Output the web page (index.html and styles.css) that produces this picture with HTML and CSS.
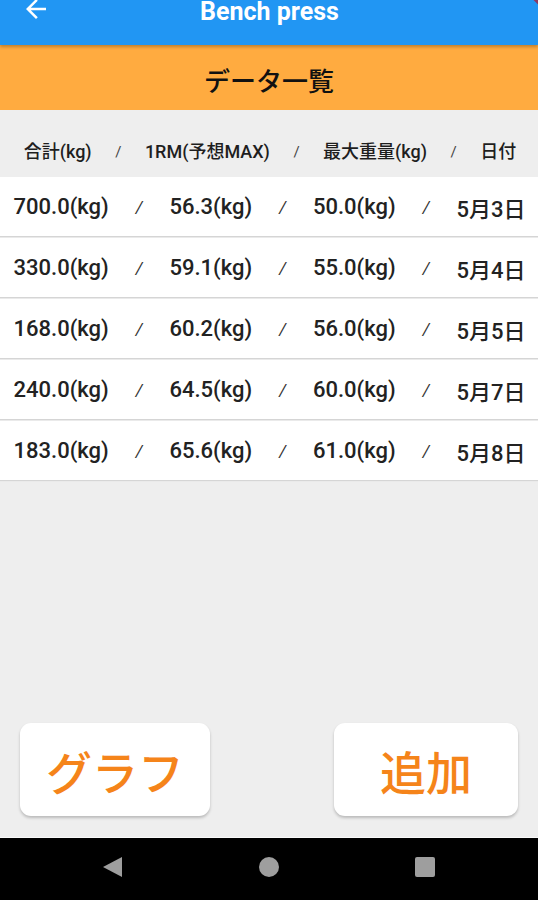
FILE: index.html
```html
<!DOCTYPE html>
<html lang="ja">
<head>
<meta charset="utf-8">
<title>Bench press</title>
<link rel="stylesheet" href="styles.css">
</head>
<body>
<div class="screen">
  <header class="appbar">
    <svg class="back" viewBox="0 0 24 24" width="30" height="30"><path d="M20 11H7.83l5.59-5.59L12 4l-8 8 8 8 1.41-1.41L7.83 13H20v-2z" fill="#fff"/></svg>
    <div class="title">Bench press</div>
    <div class="debug"></div>
  </header>
  <div class="band">データ一覧</div>
  <div class="colhead">
    <span>合計(kg)</span><span class="sl">/</span><span>1RM(予想MAX)</span><span class="sl">/</span><span>最大重量(kg)</span><span class="sl">/</span><span>日付</span>
  </div>
  <div class="list">
    <div class="row"><span>700.0(kg)</span><span class="sl">/</span><span>56.3(kg)</span><span class="sl">/</span><span>50.0(kg)</span><span class="sl">/</span><span>5月3日</span></div>
    <div class="row"><span>330.0(kg)</span><span class="sl">/</span><span>59.1(kg)</span><span class="sl">/</span><span>55.0(kg)</span><span class="sl">/</span><span>5月4日</span></div>
    <div class="row"><span>168.0(kg)</span><span class="sl">/</span><span>60.2(kg)</span><span class="sl">/</span><span>56.0(kg)</span><span class="sl">/</span><span>5月5日</span></div>
    <div class="row"><span>240.0(kg)</span><span class="sl">/</span><span>64.5(kg)</span><span class="sl">/</span><span>60.0(kg)</span><span class="sl">/</span><span>5月7日</span></div>
    <div class="row"><span>183.0(kg)</span><span class="sl">/</span><span>65.6(kg)</span><span class="sl">/</span><span>61.0(kg)</span><span class="sl">/</span><span>5月8日</span></div>
  </div>
  <div class="spacer"></div>
  <div class="actions">
    <button class="btn btn-graph">グラフ</button>
    <button class="btn btn-add">追加</button>
  </div>
  <nav class="navbar">
    <svg class="nav-back" width="20" height="20" viewBox="0 0 20 20"><path d="M20 0V20L1 10Z" fill="#9e9e9e"/></svg>
    <span class="nav-home"></span>
    <span class="nav-recent"></span>
  </nav>
</div>
</body>
</html>
```

FILE: styles.css
```css
html, body {
  margin: 0;
  padding: 0;
}
body {
  width: 538px;
  height: 900px;
  overflow: hidden;
  background: #eeeeee;
  font-family: Roboto, "Noto Sans CJK JP", sans-serif;
  color: #212121;
}
.screen {
  display: flex;
  flex-direction: column;
  height: 900px;
}
.appbar {
  position: relative;
  height: 45px;
  flex: none;
  background: #2196f3;
  box-shadow: 0 2px 3px rgba(0,0,0,0.25);
  z-index: 2;
  overflow: hidden;
}
.back {
  position: absolute;
  left: 21px;
  top: -6px;
}
.title {
  text-align: center;
  color: #fff;
  font-weight: 700;
  font-size: 25px;
  line-height: 24px;
  height: 24px;
  padding-left: 1px;
}
.debug {
  position: absolute;
  right: -34px;
  top: -6px;
  width: 60px;
  height: 12px;
  background: #9b2a49;
  transform: rotate(45deg);
  opacity: 0.85;
}
.band {
  height: 65px;
  flex: none;
  background: #ffab40;
  display: flex;
  align-items: center;
  justify-content: center;
  font-family: "Noto Sans CJK JP", sans-serif;
  font-size: 26px;
  font-weight: 500;
  color: #111;
  padding-top: 3px;
  box-sizing: border-box;
}
.colhead {
  height: 67px;
  flex: none;
  box-sizing: border-box;
  padding-top: 31px;
  display: flex;
  justify-content: center;
  align-items: flex-start;
  gap: 23.5px;
  font-size: 18px;
  line-height: 22px;
  font-weight: 500;
  color: #1e1e1e;
  padding-left: 2px;
}
.colhead .sl {
  color: #444;
  font-weight: 400;
  font-size: 15px;
}
.list {
  display: flex;
  flex-direction: column;
  gap: 2px;
}
.row {
  height: 59px;
  background: #fff;
  box-shadow: 0 1px 1px rgba(0,0,0,0.10);
  display: flex;
  align-items: center;
  justify-content: center;
  gap: 27px;
  font-size: 22px;
  font-weight: 500;
  color: #222;
  padding-left: 1px;
}
.row .sl {
  color: #333;
  font-weight: 400;
  font-size: 17px;
  font-style: italic;
}
.spacer {
  flex: 1;
}
.actions {
  display: flex;
  justify-content: space-between;
  padding: 0 20px;
  margin-bottom: 21px;
}
.btn {
  height: 93px;
  border: none;
  border-radius: 11px;
  background: #fff;
  box-shadow: 0 2px 3px rgba(0,0,0,0.22);
  font-family: "Noto Sans CJK JP", sans-serif;
  font-size: 46px;
  font-weight: 500;
  color: #f5841a;
  padding: 0;
  display: flex;
  align-items: center;
  justify-content: center;
}
.btn-graph {
  width: 190px;
}
.btn-add {
  width: 184px;
}
.navbar {
  height: 62px;
  flex: none;
  background: #000;
  border-top: 1px solid #fafafa;
  position: relative;
}
.nav-back {
  position: absolute;
  left: 102px;
  top: 19px;
}
.nav-home {
  position: absolute;
  left: 259px;
  top: 19px;
  width: 20px;
  height: 20px;
  border-radius: 50%;
  background: #9e9e9e;
}
.nav-recent {
  position: absolute;
  left: 415px;
  top: 19px;
  width: 20px;
  height: 20px;
  border-radius: 2px;
  background: #9e9e9e;
}
```
